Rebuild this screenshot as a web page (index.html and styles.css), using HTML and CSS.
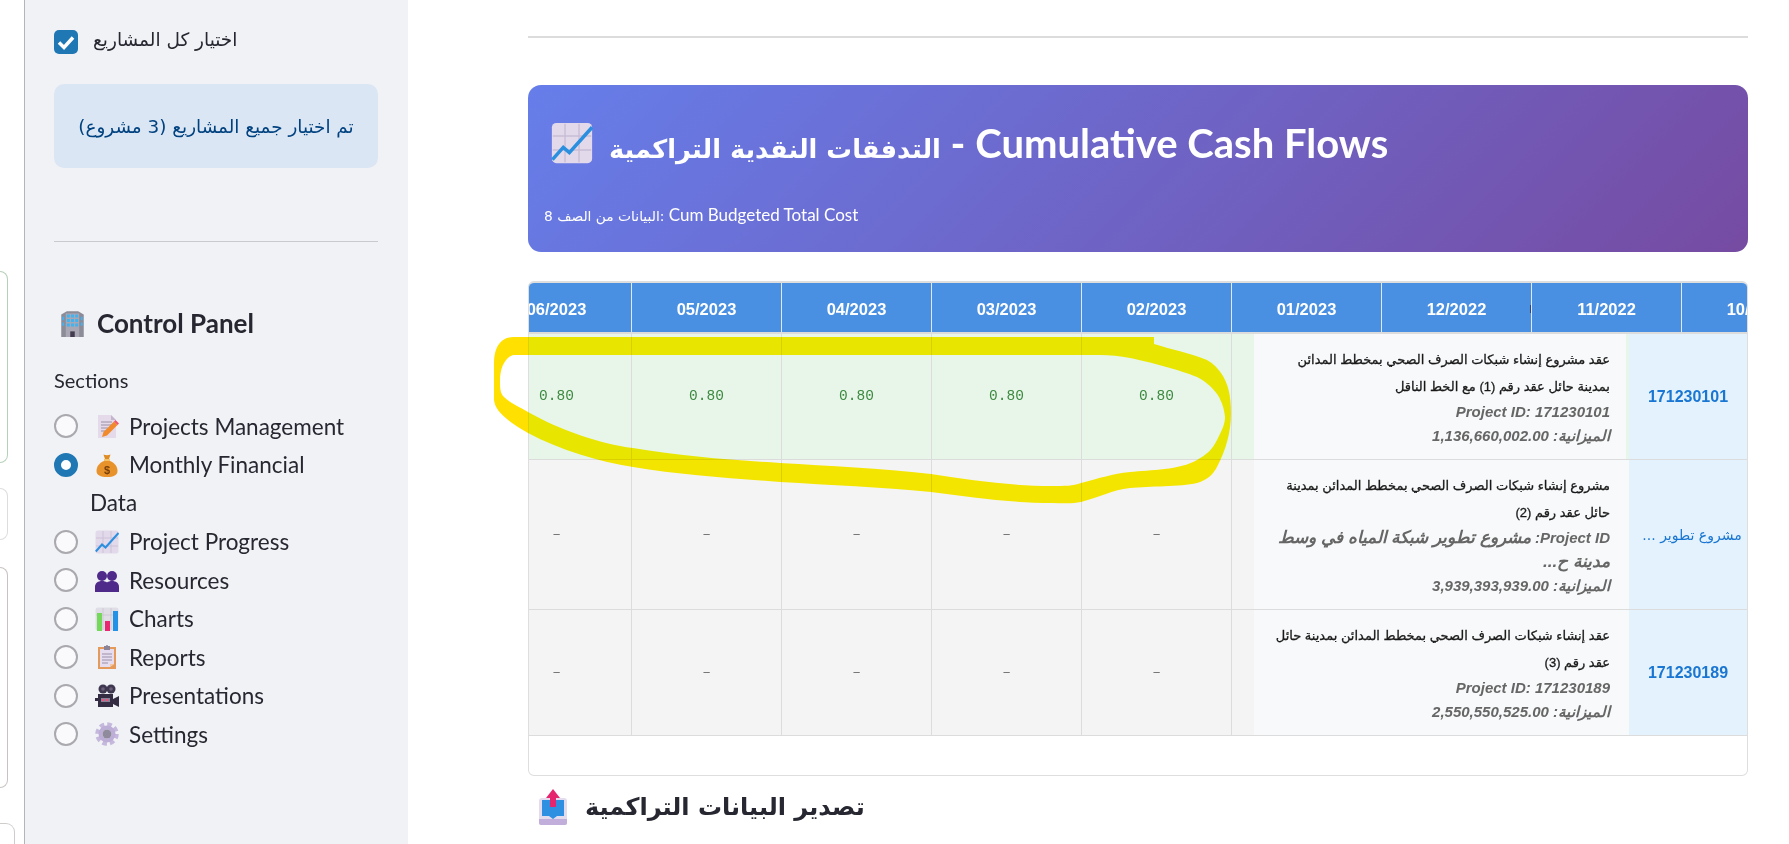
FILE: index.html
```html
<!DOCTYPE html>
<html lang="ar" dir="ltr">
<head>
<meta charset="UTF-8">
<meta name="viewport" content="width=device-width, initial-scale=1.0">
<title>Cumulative Cash Flows</title>
<link rel="stylesheet" href="styles.css">
</head>
<body>

<!-- icon set -->
<svg class="icon-defs" aria-hidden="true">
  <symbol id="i-building" viewBox="0 0 24 24">
    <path d="M2 4 7 1h10l5 3v20H2z" fill="#8c8b98"/>
    <path d="M6 3h12v21H6z" fill="#a9a7b3"/>
    <path d="M7 4h2.6v2.6H7zM10.7 4h2.6v2.6h-2.6zM14.4 4H17v2.6h-2.6zM7 8h2.6v2.6H7zM10.7 8h2.6v2.6h-2.6zM14.4 8H17v2.6h-2.6zM7 12h2.6v2.6H7zM10.7 12h2.6v2.6h-2.6zM14.4 12H17v2.6h-2.6zM3 6h1.6v3H3zM3 11h1.6v3H3zM19.400 6H21v3h-1.600zM19.400 11H21v3h-1.600z" fill="#3fb4f2"/>
    <path d="M10 19h4v5h-4z" fill="#433b4f"/>
  </symbol>
  <symbol id="i-memo" viewBox="0 0 24 24">
    <path d="M3 1h13l5 5v18H3z" fill="#e4dae9"/>
    <path d="M16 1v5h5z" fill="#c2b5cc"/>
    <path d="M6 8h11M6 11h11M6 14h7M6 17h5" stroke="#9a8fa6" stroke-width="1"/>
    <path d="M7 23l1.500-5L19 7.500l3.500 3.500L12 21.500z" fill="#f08a2c"/>
    <path d="M19 7.500 20.500 6 24 9.500 22.500 11z" fill="#f0556b"/>
  </symbol>
  <symbol id="i-chart" viewBox="0 0 24 24">
    <rect x="0.500" y="0.500" width="23" height="23" rx="2.500" fill="#e2d9ea"/>
    <path d="M8 1v22M16 1v22M1 8h22M1 16h22" stroke="#c9bed6" stroke-width="0.800"/>
    <path d="M0.800 21.500 7 14.500l3.500 3L23.500 3" fill="none" stroke="#2b8fe0" stroke-width="2"/>
  </symbol>
  <symbol id="i-people" viewBox="0 0 24 24">
    <g fill="#4f2a8a">
      <circle cx="7" cy="8" r="5"/>
      <path d="M0 24v-5c0-4 3-6 7-6s7 2 7 6v5z"/>
      <circle cx="17" cy="8" r="5"/>
      <path d="M10 24v-5c0-4 3-6 7-6s7 2 7 6v5z"/>
    </g>
  </symbol>
  <symbol id="i-bars" viewBox="0 0 24 24">
    <rect x="0.500" y="0.500" width="23" height="23" rx="2.500" fill="#dfdde6"/>
    <path d="M8 1v22M16 1v22M1 8h22" stroke="#c9c6d2" stroke-width="0.800"/>
    <path d="M2 6h5v18H2z" fill="#74d95a"/>
    <path d="M10 14h5v10h-5z" fill="#e8296f"/>
    <path d="M18 4h5v20h-5z" fill="#2391e6"/>
  </symbol>
  <symbol id="i-clip" viewBox="0 0 24 24">
    <rect x="3" y="2" width="18" height="22" fill="#e49a5a"/>
    <path d="M5 4h14v15l-4 3H5z" fill="#e6def0"/>
    <path d="M15 22l4-3h-4z" fill="#f5c79a"/>
    <path d="M9 1h2a1 1 0 0 1 2 0h2v4H9z" fill="#8d8398"/>
    <path d="M7 9h10M7 12h10M7 15h10M7 18h6" stroke="#9a90a8" stroke-width="1"/>
  </symbol>
  <symbol id="i-camera" viewBox="0 0 24 24">
    <circle cx="8" cy="5" r="4.500" fill="#3f3650"/>
    <circle cx="16" cy="5" r="4.500" fill="#3f3650"/>
    <circle cx="8" cy="5" r="1.800" fill="#6a6078"/>
    <circle cx="16" cy="5" r="1.800" fill="#6a6078"/>
    <path d="M3 10h15v13H3zM0 14h3v3H0zM18 15l6-3v11l-6-3z" fill="#342c42"/>
    <rect x="6" y="14" width="9" height="4" fill="#8a8098"/>
    <path d="M7 15h2v2H7z" fill="#f0507a"/>
    <path d="M11 15h2v2h-2z" fill="#f0507a"/>
  </symbol>
  <symbol id="i-gear" viewBox="0 0 24 24">
    <circle cx="12" cy="12" r="9.500" fill="none" stroke="#c5b8dc" stroke-width="4.500" stroke-dasharray="4.460 3"/>
    <circle cx="12" cy="12" r="6.500" fill="none" stroke="#bcaed6" stroke-width="4"/>
    <circle cx="12" cy="12" r="4.500" fill="#8f8a9c"/>
  </symbol>
  <symbol id="i-outbox" viewBox="0 0 30 36">
    <path d="M1 12c0-2 1-3 3-3h22c2 0 3 1 3 3v22c0 1-1 2-2 2H3c-1 0-2-1-2-2z" fill="#e3dcee"/>
    <path d="M1 30h28v4c0 1-1 2-2 2H3c-1 0-2-1-2-2z" fill="#c2aedb"/>
    <path d="M4 11h22v16H19l-4 3-4-3H4z" fill="#2f8fe0"/>
    <path d="M15 0l7 9h-4v9h-6V9H8z" fill="#e5266e"/>
  </symbol>
</svg>

<div class="edge-strip">
  <div class="edge-card edge-card-green"></div>
  <div class="edge-card edge-card-short"></div>
  <div class="edge-card edge-card-tall"></div>
  <div class="edge-card edge-card-wide"></div>
</div>

<aside class="sidebar">
  <label class="check-row">
    <span class="check-box">
      <svg viewBox="0 0 24 24"><path d="M5 12.500 10 17.500 19 7.500" fill="none" stroke="#fff" stroke-width="3.500"/></svg>
    </span>
    <span class="ar-label">اختيار كل المشاريع</span>
  </label>
  <div class="info-box">تم اختيار جميع المشاريع (3 مشروع)</div>
  <hr class="side-rule">
  <h2 class="panel-title"><svg class="panel-icon"><use href="#i-building"/></svg>Control Panel</h2>
  <div class="field-label">Sections</div>
  <ul class="radio-list">
    <li class="radio-item"><span class="radio"></span><svg class="radio-icon"><use href="#i-memo"/></svg><span class="radio-text">Projects Management</span></li>
    <li class="radio-item"><span class="radio radio-on"></span>
      <svg class="radio-icon" viewBox="0 0 24 24">
        <path d="M8.500 1.500c2 1 5 1 7 0l-1.500 4.500h-4z" fill="#e08a22"/>
        <path d="M9 6h6v2H9z" fill="#f4c36a"/>
        <path d="M9 8C4 10 1.500 14 1.500 18c0 4 4 6 10.500 6s10.500-2 10.500-6c0-4-2.500-8-7.500-10z" fill="#e8922c"/>
        <text x="12" y="21" class="icon-dollar">$</text>
      </svg><span class="radio-text">Monthly Financial</span></li>
    <li class="radio-wrap">Data</li>
    <li class="radio-item"><span class="radio"></span><svg class="radio-icon"><use href="#i-chart"/></svg><span class="radio-text">Project Progress</span></li>
    <li class="radio-item"><span class="radio"></span><svg class="radio-icon"><use href="#i-people"/></svg><span class="radio-text">Resources</span></li>
    <li class="radio-item"><span class="radio"></span><svg class="radio-icon"><use href="#i-bars"/></svg><span class="radio-text">Charts</span></li>
    <li class="radio-item"><span class="radio"></span><svg class="radio-icon"><use href="#i-clip"/></svg><span class="radio-text">Reports</span></li>
    <li class="radio-item"><span class="radio"></span><svg class="radio-icon"><use href="#i-camera"/></svg><span class="radio-text">Presentations</span></li>
    <li class="radio-item"><span class="radio"></span><svg class="radio-icon"><use href="#i-gear"/></svg><span class="radio-text">Settings</span></li>
  </ul>
</aside>

<main class="main">
  <hr class="top-rule">

  <section class="hero">
    <h1 class="hero-title"><svg class="hero-icon"><use href="#i-chart"/></svg><span><span class="hero-ar">التدفقات النقدية التراكمية</span><span class="hero-dash"> - </span>Cumulative Cash Flows</span></h1>
    <p class="hero-sub"><span class="hero-sub-ar">البيانات من الصف 8:</span> Cum Budgeted Total Cost</p>
  </section>

  <div class="table-frame">
    <div class="table-scroll" dir="rtl">
      <div class="head-row">
        <div class="head-cell head-cell-cut">10/2022</div>
        <div class="head-cell head-cell-mark">11/2022</div>
        <div class="head-cell">12/2022</div>
        <div class="head-cell">01/2023</div>
        <div class="head-cell">02/2023</div>
        <div class="head-cell">03/2023</div>
        <div class="head-cell">04/2023</div>
        <div class="head-cell">05/2023</div>
        <div class="head-cell">06/2023</div>
      </div>

      <div class="body-row row-filled">
        <div class="id-cell">171230101</div>
        <div class="name-cell name-cell-narrow">
          <div class="name-title">عقد مشروع إنشاء شبكات الصرف الصحي بمخطط المدائن<br>بمدينة حائل عقد رقم (1) مع الخط الناقل</div>
          <div class="name-meta">Project ID: 171230101</div>
          <div class="name-meta">الميزانية: 1,136,660,002.00</div>
        </div>
        <div class="gap-cell"></div>
        <div class="val-cell val-on">0.80</div>
        <div class="val-cell val-on">0.80</div>
        <div class="val-cell val-on">0.80</div>
        <div class="val-cell val-on">0.80</div>
        <div class="val-cell val-on">0.80</div>
      </div>

      <div class="body-row">
        <div class="id-cell id-cell-text"><span class="id-clip">مشروع تطوير ...</span></div>
        <div class="name-cell">
          <div class="name-title">مشروع إنشاء شبكات الصرف الصحي بمخطط المدائن بمدينة<br>حائل عقد رقم (2)</div>
          <div class="name-meta">Project ID: <span class="meta-ar">مشروع تطوير شبكة المياه في وسط<br>مدينة ح...</span></div>
          <div class="name-meta">الميزانية: 3,939,393,939.00</div>
        </div>
        <div class="gap-cell"></div>
        <div class="val-cell">–</div>
        <div class="val-cell">–</div>
        <div class="val-cell">–</div>
        <div class="val-cell">–</div>
        <div class="val-cell">–</div>
      </div>

      <div class="body-row">
        <div class="id-cell">171230189</div>
        <div class="name-cell">
          <div class="name-title">عقد إنشاء شبكات الصرف الصحي بمخطط المدائن بمدينة حائل<br>عقد رقم (3)</div>
          <div class="name-meta">Project ID: 171230189</div>
          <div class="name-meta">الميزانية: 2,550,550,525.00</div>
        </div>
        <div class="gap-cell"></div>
        <div class="val-cell">–</div>
        <div class="val-cell">–</div>
        <div class="val-cell">–</div>
        <div class="val-cell">–</div>
        <div class="val-cell">–</div>
      </div>
    </div>
  </div>

  <h2 class="export-title"><svg class="export-icon"><use href="#i-outbox"/></svg>تصدير البيانات التراكمية</h2>
</main>

<!-- yellow pen mark drawn on top of the screenshot -->
<svg class="scribble" viewBox="0 0 1789 844" aria-hidden="true">
  <defs>
    <linearGradient id="pen" gradientUnits="userSpaceOnUse" x1="494" y1="0" x2="1231" y2="0">
      <stop offset="0.046" stop-color="#ffe000"/>
      <stop offset="0.046" stop-color="#fff000"/>
    </linearGradient>
  </defs>
  <path fill="url(#pen)" fill-rule="evenodd" d="M1154 337H514C500 337 494 348 494 363L494 400C495 410 505 420 528 433C560 450 600 462 633 467C680 475 730 478 780 482C830 485 880 487 931 492C970 497 1010 503 1052 503C1062 503 1072 504 1081 502C1100 497 1112 490 1130 488C1150 486 1180 487 1197 483C1208 480 1214 473 1217 467C1226 450 1231 432 1231 413C1231 395 1228 383 1221 373C1216 366 1212 363 1207 360C1190 353 1170 349 1154 344Z M514 355C506 356 500 367 500 380C500 388 500 393 504 397C510 403 518 406 528 412C560 430 600 444 633 448C680 456 730 460 780 463C830 466 880 468 931 474C970 480 1010 486 1052 486C1065 486 1073 486 1081 483C1100 478 1112 474 1130 472C1150 470 1180 470 1197 460C1206 455 1212 450 1217 440C1222 430 1225 424 1225 417C1224 408 1222 403 1219 397C1215 390 1207 382 1197 377C1180 370 1150 362 1130 358C1120 356 1110 355 1100 355Z"/>
</svg>

</body>
</html>
```

FILE: styles.css
```css
html, body {
  margin: 0;
  height: 844px;
  overflow: hidden;
  background-color: #fff;
}
body {
  display: flex;
  font-family: "Lato", "DejaVu Sans", sans-serif;
  color: #262730;
}
.icon-defs {
  width: 0;
  height: 0;
  position: absolute;
}
.icon-dollar {
  font-family: "Liberation Sans", sans-serif;
  font-size: 11px;
  font-weight: bold;
  text-anchor: middle;
  fill: #7a3f08;
}

/* strip of the page left of the sidebar */
.edge-strip {
  width: 24px;
  flex-shrink: 0;
  padding-top: 271px;
  box-sizing: border-box;
  overflow: hidden;
}
.edge-card {
  width: 8px;
  box-sizing: border-box;
  border: 1px solid #d0cccc;
  border-left: none;
  border-radius: 0 9px 9px 0;
}
.edge-card-green {
  height: 192px;
  border-color: #b4d0b8;
}
.edge-card-short {
  height: 52px;
  margin-top: 25px;
  border-color: #dddddd;
}
.edge-card-tall {
  height: 221px;
  margin-top: 27px;
  border-color: #c9c2c2;
}
.edge-card-wide {
  width: 15px;
  height: 60px;
  margin-top: 35px;
}

/* sidebar */
.sidebar {
  width: 384px;
  flex-shrink: 0;
  box-sizing: border-box;
  padding: 30px 30px 0 29px;
  background-color: #f0f2f6;
  border-left: 1px solid #b4b4ba;
}
.check-row {
  display: flex;
  align-items: center;
  gap: 15px;
  height: 24px;
}
.check-box {
  width: 24px;
  height: 24px;
  border-radius: 5px;
  background-color: #1f77b4;
  display: block;
}
.check-box svg {
  display: block;
  width: 24px;
  height: 24px;
}
.ar-label {
  font-family: "DejaVu Sans", sans-serif;
  font-size: 18.500px;
  line-height: 20px;
  padding-bottom: 4px;
  color: #262730;
}
.info-box {
  margin-top: 30px;
  height: 84px;
  border-radius: 10px;
  background-color: #dbe6f4;
  color: #004280;
  font-family: "DejaVu Sans", sans-serif;
  font-size: 18.400px;
  display: flex;
  align-items: center;
  justify-content: center;
}
.side-rule {
  margin: 73px 0 0;
  border: none;
  height: 1px;
  background-color: #c9cacf;
}
.panel-title {
  margin: 67px 0 0;
  display: flex;
  align-items: center;
  height: 28px;
  font-size: 26px;
  font-weight: 700;
  color: #262730;
}
.panel-icon {
  width: 27px;
  height: 27px;
  margin: 0 11px 0 5px;
}
.field-label {
  margin-top: 31px;
  font-size: 20px;
  line-height: 24px;
}
.radio-list {
  list-style: none;
  margin: 15px 0 0;
  padding: 0;
}
.radio-item {
  display: flex;
  align-items: center;
  height: 38.500px;
  font-size: 22.500px;
}
.radio-wrap {
  height: 38.500px;
  line-height: 38.500px;
  padding-left: 36px;
  font-size: 22.500px;
}
.radio {
  width: 24px;
  height: 24px;
  box-sizing: border-box;
  border: 2px solid #a9a9ae;
  border-radius: 50%;
  background-color: #fafafc;
  flex-shrink: 0;
}
.radio-on {
  border: 7px solid #1f77b4;
  background-color: #fff;
}
.radio-icon {
  width: 24px;
  height: 24px;
  margin: 0 10px 0 17px;
  flex-shrink: 0;
}

/* main column */
.main {
  flex: 1;
  min-width: 0;
  padding: 36px 41px 0 120px;
}
.top-rule {
  margin: 0;
  border: none;
  height: 2px;
  background-color: #dcdcdc;
}
.hero {
  margin-top: 47px;
  height: 167px;
  box-sizing: border-box;
  padding: 35px 16px 0;
  border-radius: 13px;
  background: linear-gradient(135deg, #667eea 0%, #764ba2 100%);
  color: #fff;
}
.hero-title {
  margin: 0;
  display: flex;
  align-items: center;
  gap: 16px;
  padding-left: 7px;
  height: 46px;
  font-size: 40px;
  font-weight: 700;
  white-space: pre;
}
.hero-ar {
  font-family: "DejaVu Sans", sans-serif;
  font-size: 25.700px;
}
.hero-dash {
  letter-spacing: -4px;
}
.hero-icon {
  width: 42px;
  height: 42px;
  flex-shrink: 0;
}
.hero-sub {
  margin: 37px 0 0;
  font-size: 17px;
  line-height: 24px;
}
.hero-sub-ar {
  font-family: "DejaVu Sans", sans-serif;
  font-size: 13.800px;
}

/* table */
.table-frame {
  margin-top: 29px;
  height: 495px;
  box-sizing: border-box;
  border: 1px solid #dedede;
  border-top-width: 2px;
  border-radius: 6px;
  overflow: hidden;
}
.table-scroll {
  overflow: hidden;
}
.head-row {
  display: flex;
  height: 49px;
  background-color: #4a90e2;
  border-bottom: 2px solid #dcdcdc;
}
.head-cell {
  position: relative;
  width: 150px;
  flex-shrink: 0;
  box-sizing: border-box;
  border-left: 1px solid #e4e8ee;
  text-align: center;
  line-height: 52px;
  font-family: "Liberation Sans", sans-serif;
  font-size: 16.500px;
  font-weight: bold;
  color: #fff;
}
.head-cell-cut {
  margin-right: -84px;
}
.head-cell-mark::after {
  content: "";
  position: absolute;
  left: -2px;
  top: 22px;
  width: 1px;
  height: 8px;
  background-color: #27477e;
}
.body-row {
  display: flex;
  background-color: #f4f4f4;
  border-bottom: 1px solid #dcdcdc;
}
.row-filled {
  background-color: #e8f5e9;
}
.id-cell {
  width: 118px;
  flex-shrink: 0;
  box-sizing: border-box;
  display: flex;
  align-items: center;
  justify-content: center;
  background-color: #e3f2fd;
  font-family: "Liberation Sans", "DejaVu Sans", sans-serif;
  font-size: 16px;
  font-weight: bold;
  color: #1976d2;
}
.id-cell-text {
  font-family: "DejaVu Sans", sans-serif;
  font-size: 14px;
  font-weight: normal;
  padding-left: 8px;
}
.id-clip {
  white-space: nowrap;
}
.name-cell {
  width: 375px;
  flex-shrink: 0;
  box-sizing: border-box;
  padding: 11.500px 19px 11.500px 0;
  background-color: #f8f9fa;
  font-family: "Liberation Sans", "DejaVu Sans", sans-serif;
  white-space: nowrap;
}
.name-cell-narrow {
  width: 372px;
  margin-right: 3px;
  padding-right: 16px;
}
.name-title {
  font-size: 13px;
  line-height: 27px;
  color: #1a1a1a;
  -webkit-text-stroke: 0.3px #1a1a1a;
}
.name-meta {
  font-size: 15px;
  line-height: 24px;
  font-style: italic;
  font-weight: bold;
  color: #666;
}
.meta-ar {
  font-size: 17px;
}
.gap-cell {
  width: 23px;
  flex-shrink: 0;
  box-sizing: border-box;
  border-left: 1px solid #dcdcdc;
}
.val-cell {
  width: 150px;
  flex-shrink: 0;
  box-sizing: border-box;
  border-left: 1px solid #dcdcdc;
  display: flex;
  align-items: center;
  justify-content: center;
  padding-bottom: 2px;
  font-family: "Liberation Mono", monospace;
  font-size: 14.500px;
  color: #777;
}
.val-on {
  color: #3c8a40;
}

.export-title {
  margin: 13px 0 0;
  display: flex;
  align-items: center;
  gap: 17px;
  padding-left: 10px;
  height: 36px;
  font-family: "DejaVu Sans", sans-serif;
  font-size: 24px;
  font-weight: bold;
  color: #262730;
}
.export-icon {
  width: 30px;
  height: 36px;
  flex-shrink: 0;
}

/* pen mark sits over the table */
.scribble {
  position: absolute;
  left: 0;
  top: 0;
  width: 1789px;
  height: 844px;
  pointer-events: none;
  mix-blend-mode: multiply;
}
```
